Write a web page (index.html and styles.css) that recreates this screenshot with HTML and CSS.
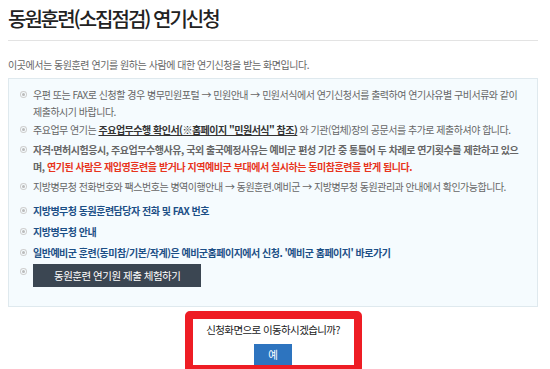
FILE: index.html
```html
<!DOCTYPE html>
<html lang="ko">
<head>
<meta charset="utf-8">
<title>동원훈련(소집점검) 연기신청</title>
<link rel="stylesheet" href="styles.css">
</head>
<body>
<div class="page">
  <h1 class="title">동원훈련(소집점검) 연기신청</h1>
  <p class="intro">이곳에서는 동원훈련 연기를 원하는 사람에 대한 연기신청을 받는 화면입니다.</p>
  <div class="infobox">
    <ul class="list">
      <li>우편 또는 FAX로 신청할 경우 병무민원포털 → 민원안내 → 민원서식에서 연기신청서를 출력하여 연기사유별 구비서류와 같이 제출하시기 바랍니다.</li>
      <li class="i2">주요업무 연기는 <u class="strong">주요업무수행 확인서(※홈페이지 "민원서식" 참조)</u> 와 기관(업체)장의 공문서를 추가로 제출하셔야 합니다.</li>
      <li class="strong i3">자격·면허시험응시, 주요업무수행사유, 국외 출국예정사유는 예비군 편성 기간 중 통틀어 두 차례로 연기횟수를 제한하고 있으며, <span class="red">연기된 사람은 재입영훈련을 받거나 지역예비군 부대에서 실시하는 동미참훈련을 받게 됩니다.</span></li>
      <li class="i3">지방병무청 전화번호와 팩스번호는 병역이행안내 → 동원훈련.예비군 → 지방병무청 동원관리과 안내에서 확인가능합니다.</li>
      <li class="link i5">지방병무청 동원훈련담당자 전화 및 FAX 번호</li>
      <li class="link">지방병무청 안내</li>
      <li class="link">일반예비군 훈련(동미참/기본/작계)은 예비군홈페이지에서 신청. '예비군 홈페이지' 바로가기</li>
      <li class="btnrow"><span class="btn">동원훈련 연기원 제출 체험하기</span></li>
    </ul>
  </div>
  <div class="dialog">
    <p class="question">신청화면으로 이동하시겠습니까?</p>
    <span class="yes">예</span>
  </div>
</div>
</body>
</html>
```
FILE: styles.css
```css
html, body {
  margin: 0;
  padding: 0;
  background: #ffffff;
}
body {
  font-family: "Noto Sans CJK KR", "Noto Sans", sans-serif;
  color: #666;
  overflow: hidden;
  height: 369px;
}
.page {
  padding: 4px 12px 0 8px;
}
.title {
  margin: 0;
  font-size: 20px;
  font-weight: 500;
  color: #222;
  letter-spacing: -2px;
  line-height: 30px;
  padding-bottom: 6px;
  border-bottom: 1px solid #e3e3e3;
}
.intro {
  margin: 0;
  padding: 16px 0 0;
  font-size: 10px;
  line-height: 16px;
  letter-spacing: -0.45px;
  color: #666;
}
.infobox {
  margin-top: 5px;
  background: #f5fbfe;
  border: 1px solid #dfe9ee;
  padding: 7px 10px 19px 13px;
}
.list {
  list-style: none;
  margin: 0;
  padding: 0;
}
.list li {
  position: relative;
  padding-left: 11px;
  font-size: 10px;
  line-height: 17px;
  letter-spacing: -0.5px;
  color: #666;
  margin-top: 1px;
}
.list li:first-child {
  margin-top: 0;
}
.list li::before {
  content: "";
  position: absolute;
  left: 0;
  top: 7px;
  width: 3px;
  height: 3px;
  border-radius: 50%;
  background: #bbb;
  box-shadow: 0 0 0 1px #f5fbfe, 0 0 0 2px #cfcfcf;
}
.strong {
  font-weight: 700;
  color: #333;
}
.list li.i3 {
  margin-top: 3px;
}
.list li.strong {
  letter-spacing: -0.45px;
}
u.strong {
  text-decoration: underline;
}
.red {
  color: #e8341c;
}
.list li.link {
  font-weight: 700;
  color: #1c4f86;
  margin-top: 4px;
  letter-spacing: -0.5px;
}
.list li.i5 {
  margin-top: 7px;
}
.list li.btnrow {
  margin-top: 3px;
  line-height: 23px;
}
.list li.btnrow::before {
  top: 6px;
}
.btn {
  display: inline-block;
  vertical-align: top;
  background: #3b4652;
  color: #fff;
  font-weight: 400;
  font-size: 10.5px;
  line-height: 23px;
  padding: 0 21px;
  letter-spacing: -0.5px;
}
.dialog {
  width: 161px;
  margin: 4px auto 0;
  border: 8px solid #ee1d24;
  border-radius: 5px;
  background: #fff;
  text-align: center;
}
.question {
  margin: 0;
  padding-top: 2px;
  font-size: 10.5px;
  line-height: 18px;
  color: #222;
  letter-spacing: -0.6px;
}
.yes {
  display: inline-block;
  margin-top: 5px;
  width: 38px;
  line-height: 21px;
  background: #2d74bf;
  color: #fff;
  font-size: 10.5px;
}
```
